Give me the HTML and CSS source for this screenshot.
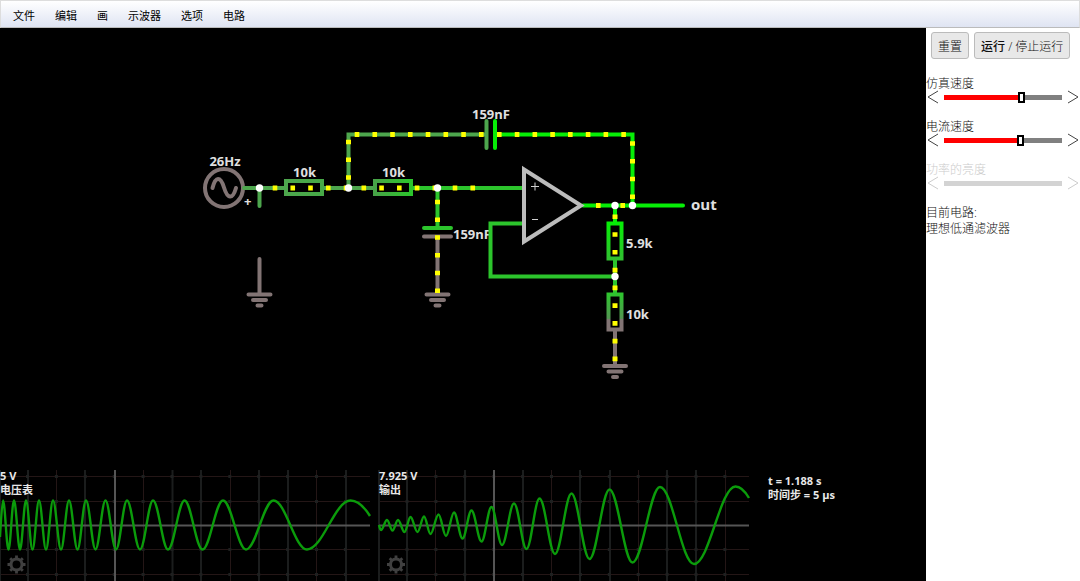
FILE: index.html
```html
<!DOCTYPE html>
<html lang="zh-CN">
<head>
<meta charset="utf-8">
<meta name="viewport" content="width=device-width, initial-scale=1">
<title>电路</title>
<link rel="stylesheet" href="styles.css">
</head>
<body>
<nav class="menubar">
  <button type="button">文件</button>
  <button type="button">编辑</button>
  <button type="button">画</button>
  <button type="button">示波器</button>
  <button type="button">选项</button>
  <button type="button">电路</button>
</nav>
<main class="workspace">
  <svg class="board" viewBox="0 28 926 553" preserveAspectRatio="xMinYMin meet">
    <defs>
      <linearGradient id="r1" x1="0" x2="1"><stop offset="0" stop-color="#4da64d"/><stop offset="1" stop-color="#47a947"/></linearGradient>
      <linearGradient id="r2" x1="0" x2="1"><stop offset="0" stop-color="#47a347"/><stop offset="1" stop-color="#2cc52c"/></linearGradient>
      <linearGradient id="r3" x1="0" y1="0" x2="0" y2="1"><stop offset="0" stop-color="#06ee06"/><stop offset="1" stop-color="#30c030"/></linearGradient>
      <linearGradient id="r4" x1="0" y1="0" x2="0" y2="1"><stop offset="0" stop-color="#2fc42f"/><stop offset=".68" stop-color="#529652"/><stop offset=".72" stop-color="#827474"/><stop offset="1" stop-color="#827474"/></linearGradient>
      <g id="ground"><path d="M-11 0H11M-6.500 5.500H6.500M-2 11H2"/></g>
      <g id="gear">
        <circle r="5.500" fill="none" stroke-width="3"/>
        <path d="M0-5.500V-9M0 5.500V9M-5.500 0H-9M5.500 0H9M-4-4L-6.300-6.300M4-4L6.300-6.300M-4 4L-6.300 6.300M4 4L6.300 6.300" stroke-width="2.800"/>
      </g>
    </defs>

    <g class="label">
      <text x="225" y="166" text-anchor="middle">26Hz</text>
      <text x="304.500" y="177" text-anchor="middle">10k</text>
      <text x="393.500" y="177" text-anchor="middle">10k</text>
      <text x="491" y="119" text-anchor="middle">159nF</text>
      <text x="453" y="239">159nF</text>
      <text x="626" y="248">5.9k</text>
      <text x="626" y="319">10k</text>
      <text x="244" y="206">+</text>
      <text class="out" x="691" y="210">out</text>
    </g>

    <g class="wire gray">
      <circle cx="224" cy="188" r="19"/>
      <path d="M212.500 188C215.500 176 220.500 176 224 187.500S232.500 200 236 188"/>
      <path d="M259.500 259V294M437.500 238V294M615 330V366M424 236.500H451"/>
      <use href="#ground" x="259.500" y="294.500"/>
      <use href="#ground" x="437.500" y="294.500"/>
      <use href="#ground" x="615" y="366"/>
    </g>
    <path class="wire dim" d="M244 188H286M259.500 188V206M323 188H375M348.500 188V134.500H486M486.500 121V148"/>
    <path class="wire mid" d="M412 188H522M437.500 188V228M424 228H451M522 223.500H490.500V276.500H615M615 260V294"/>
    <path class="wire hot" d="M495 134.500H632.500V205.500M495 121V148M583 205.500H683M615 205.500V223"/>
    <rect class="wire" x="286" y="181" width="36" height="13" stroke="url(#r1)"/>
    <rect class="wire" x="375" y="181" width="36" height="13" stroke="url(#r2)"/>
    <rect class="wire" x="608.500" y="223.500" width="13" height="35" stroke="url(#r3)"/>
    <rect class="wire" x="608.500" y="294.500" width="13" height="35" stroke="url(#r4)"/>
    <path class="amp" d="M524 169.500L581 205.500L524 241.500Z"/>
    <path class="sign" d="M531 186.500H539M535 182.500V190.500M532 219.500H538"/>

    <path class="current" d="M272.700 188H437"/>
    <path class="current" d="M452.700 188H477"/>
    <path class="current" d="M348.500 139.700V184"/>
    <path class="current" d="M354.700 134.500H484"/>
    <path class="current" d="M497 134.500H627"/>
    <path class="current" d="M632.500 141.200V200"/>
    <path class="current" d="M596 205.500H602M620.400 205.500H625"/>
    <path class="current" d="M615 214.500V362"/>
    <path class="current" d="M437.500 199.700V294"/>
    <g class="node">
      <circle cx="259.500" cy="188" r="3.700"/><circle cx="348.500" cy="188" r="3.700"/>
      <circle cx="437.500" cy="188" r="3.700"/><circle cx="615" cy="205.500" r="3.700"/>
      <circle cx="632.500" cy="205.500" r="3.700"/><circle cx="615" cy="276.500" r="3.700"/>
    </g>

    <g class="scope">
      <path class="grid-red" d="M0 476.500H370M0 501.500H370M0 549.500H370M0 574.500H370M56.500 470V581M143.500 470V581M230.500 470V581M316.500 470V581"/>
      <path class="grid" d="M0 470V581M28 470V581M85 470V581M172.500 470V581M201 470V581M259 470V581M288 470V581M346 470V581"/>
      <path class="knots" d="M26 476.500H370M26 501.500H370M26 549.500H370M26 574.500H370"/>
      <path class="axis" d="M0 525.500H370M115 470V581"/>
      <path class="trace" id="input-trace"/>
      <use class="gear" href="#gear" x="16.500" y="564.500"/>
      <text x="0" y="480">5 V</text>
      <text x="0" y="494">电压表</text>
    </g>
    <g class="scope">
      <path class="grid-red" d="M379 476.500H749M379 501.500H749M379 549.500H749M379 574.500H749M435.500 470V581M551.500 470V581M638.500 470V581M725.500 470V581"/>
      <path class="grid" d="M379 470V581M407 470V581M465 470V581M523 470V581M580 470V581M610 470V581M667 470V581M696 470V581"/>
      <path class="knots" d="M405.500 476.500H749M405.500 501.500H749M405.500 549.500H749M405.500 574.500H749"/>
      <path class="axis" d="M379 525.500H749M494 470V581"/>
      <path class="trace" id="output-trace"/>
      <use class="gear" href="#gear" x="396" y="564.500"/>
      <text x="379" y="480">7.925 V</text>
      <text x="379" y="494">输出</text>
    </g>
    <g class="scope">
      <text x="768" y="485">t = 1.188 s</text>
      <text x="768" y="499">时间步 = 5 µs</text>
    </g>
  </svg>

  <aside class="panel">
    <div class="actions">
      <button type="button">重置</button>
      <button type="button"><strong>运行</strong> / 停止运行</button>
    </div>
    <div class="field">
      <label for="sim">仿真速度</label>
      <div class="slider">
        <button type="button" aria-label="减"><svg viewBox="0 0 12 14"><path d="M11 1L1 7L11 13"/></svg></button>
        <input id="sim" class="sim" type="range" min="0" max="100" value="67">
        <button type="button" aria-label="加"><svg viewBox="0 0 12 14"><path d="M1 1L11 7L1 13"/></svg></button>
      </div>
    </div>
    <div class="field">
      <label for="cur">电流速度</label>
      <div class="slider">
        <button type="button" aria-label="减"><svg viewBox="0 0 12 14"><path d="M11 1L1 7L11 13"/></svg></button>
        <input id="cur" class="cur" type="range" min="0" max="100" value="66">
        <button type="button" aria-label="加"><svg viewBox="0 0 12 14"><path d="M1 1L11 7L1 13"/></svg></button>
      </div>
    </div>
    <div class="field disabled">
      <label for="pow">功率的亮度</label>
      <div class="slider">
        <button type="button" aria-label="减" disabled><svg viewBox="0 0 12 14"><path d="M11 1L1 7L11 13"/></svg></button>
        <input id="pow" type="range" min="0" max="100" value="50" disabled>
        <button type="button" aria-label="加" disabled><svg viewBox="0 0 12 14"><path d="M1 1L11 7L1 13"/></svg></button>
      </div>
    </div>
    <p>目前电路:<br>理想低通滤波器</p>
  </aside>
</main>
<script src="script.js"></script>
</body>
</html>
```

FILE: styles.css
```css
* { box-sizing: border-box; }

body {
  margin: 0;
  height: 100vh;
  display: flex;
  flex-direction: column;
  overflow: hidden;
  background: #fff;
  color: #111;
  font-family: "Open Sans", "Noto Sans CJK SC", sans-serif;
  font-size: 12px;
}

button {
  margin: 0;
  padding: 0;
  border: 0;
  background: none;
  color: inherit;
  font: inherit;
}

.menubar {
  display: flex;
  gap: 20px;
  height: 28px;
  flex: none;
  align-items: center;
  padding: 2px 12px 0;
  border: 1px solid #ddd;
  border-bottom-color: #bbb;
  background: linear-gradient(#fff, #dfe4f2);
  color: #000;
  font-size: 11px;
}

.workspace {
  flex: 1;
  display: flex;
  min-height: 0;
  background: #000;
}

.board {
  flex: 1;
  min-width: 0;
  height: 100%;
  background: #000;
}

.label text { fill: #e0e0e0; font-size: 13px; font-weight: 700; }
.label .out { font-size: 15px; }

.wire { fill: none; stroke-width: 4; stroke-linecap: round; stroke-linejoin: miter; }
.gray { stroke: #827474; }
.dim { stroke: #4da64d; }
.mid { stroke: #2cc52c; }
.hot { stroke: #06ee06; }
.amp { fill: none; stroke: #bcbcbc; stroke-width: 4; }
.sign { stroke: #d0d0d0; stroke-width: 1; }
.current { fill: none; stroke: #ff0; stroke-width: 5; stroke-dasharray: 4.6 13.16; }
.node { fill: #fff; }

.scope text { fill: #e8e8e8; font-size: 11px; font-weight: 700; }
.grid-red { stroke: #241616; fill: none; }
.grid { stroke: #1b1d1d; stroke-width: 2; fill: none; }
.knots { stroke: #1e2020; stroke-width: 3; stroke-dasharray: 3 25.9; fill: none; }
.axis { stroke: #555; stroke-width: 2; fill: none; }
.trace { stroke: #0b9b0b; stroke-width: 2.4; fill: none; }
.gear { stroke: #404040; }

.panel {
  width: 154px;
  flex: none;
  background: #fff;
  font-weight: 300;
}

.actions {
  display: flex;
  gap: 5px;
  padding: 4px 5px 17px;
}

.actions button {
  height: 27px;
  padding: 0 6px;
  border: 1px solid #bbb;
  border-radius: 3px;
  background: #e8e8e8;
  white-space: nowrap;
}

.actions strong { font-weight: 500; }

.field {
  height: 42px;
  margin-bottom: 1px;
}

.field label { display: block; line-height: 15px; }

.slider {
  display: flex;
  align-items: center;
  gap: 5px;
  height: 14px;
  margin-top: -1px;
  padding: 0 1px;
}

.slider button { width: 12px; height: 14px; flex: none; }
.slider svg { display: block; width: 12px; height: 14px; fill: none; stroke: #444; }

.slider input {
  appearance: none;
  flex: 1;
  min-width: 0;
  height: 14px;
  margin: 0;
  background: none;
}

.slider input::-webkit-slider-runnable-track { height: 5px; background: #808080; }
.slider .sim::-webkit-slider-runnable-track { background: linear-gradient(90deg, #f00 67%, #808080 67%); }
.slider .cur::-webkit-slider-runnable-track { background: linear-gradient(90deg, #f00 66%, #808080 66%); }

.slider input::-webkit-slider-thumb {
  appearance: none;
  width: 7px;
  height: 11px;
  margin-top: -3px;
  border: 2px solid #000;
  background: #fff;
}

.disabled { color: #ccc; }
.disabled .slider svg { stroke: #ccc; }
.disabled .slider input::-webkit-slider-runnable-track { background: #d3d3d3; }
.disabled .slider input::-webkit-slider-thumb { visibility: hidden; }

.panel p { margin: 0; line-height: 16px; }
```

FILE: script.js
```js
// Joins successive extrema with half-sine segments.
function trace(start, extrema, tail) {
  let [x, y] = start;
  let d = `M${x} ${y}`;
  extrema.forEach(([nx, ny], i) => {
    const k = (nx - x) * 0.364;
    d += i === 0
      ? `Q${nx - 1} ${ny} ${nx} ${ny}`
      : `C${x + k} ${y} ${nx - k} ${ny} ${nx} ${ny}`;
    x = nx;
    y = ny;
  });
  return `${d}Q${x + (tail[0] - x) * 0.5} ${y} ${tail[0]} ${tail[1]}`;
}

const inputX = [3, 8.5, 14, 20, 26, 32.5, 39, 46, 53, 61, 69, 77.5, 86, 95.5,
  105.5, 116, 127, 140, 153, 168, 184.5, 202.5, 223, 246, 273.5, 307, 350.5];

const output = [[381, 530], [387, 520], [392.5, 530.5], [398, 520], [404.5, 532],
  [410.5, 517], [417.5, 532], [424, 516.5], [430.5, 534], [438.5, 514.5],
  [446, 536], [454, 512.5], [462.5, 538.5], [471.5, 510.5], [481.5, 541.5],
  [491.5, 507], [502, 545], [514, 503.5], [526.5, 549], [539.5, 498.5],
  [555, 554], [571.5, 493.5], [589.5, 559], [609.5, 489.5], [632.5, 562.5],
  [660, 487], [694, 564], [735.5, 486.5]];

document.getElementById("input-trace").setAttribute("d",
  trace([0, 537], inputX.map((x, i) => [x, i % 2 ? 549.5 : 500.5]), [370, 516]));
document.getElementById("output-trace").setAttribute("d",
  trace([379, 525], output, [749, 498]));
```
